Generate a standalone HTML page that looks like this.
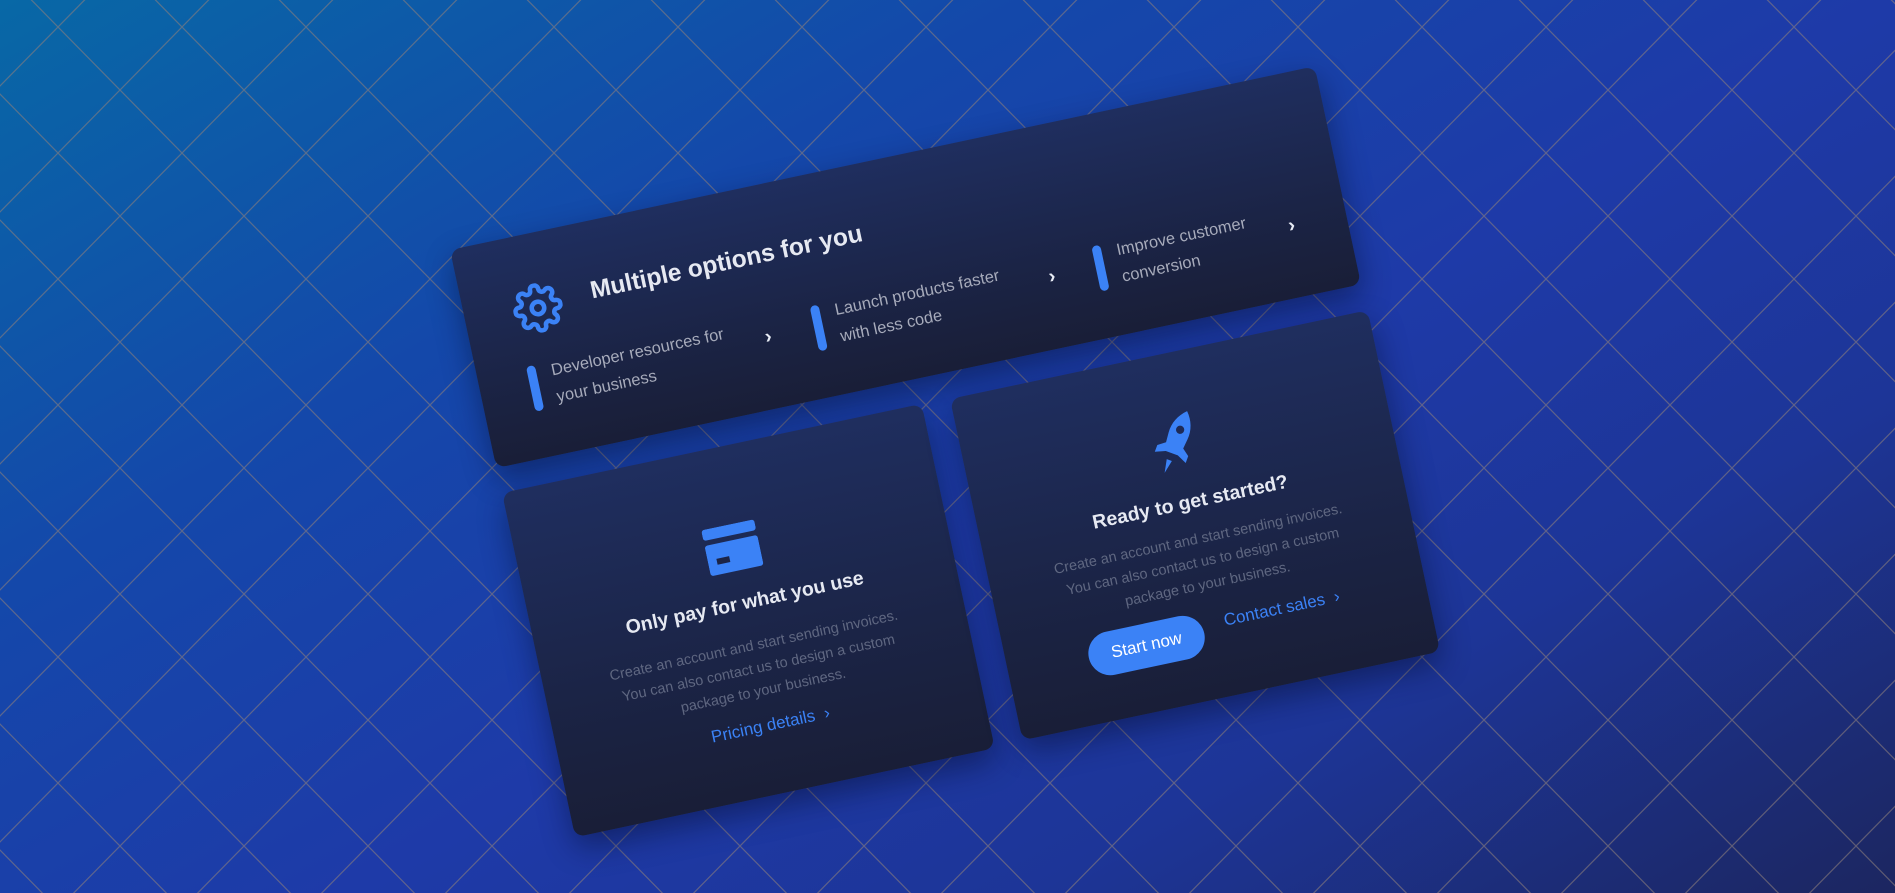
<!DOCTYPE html>
<html><head><meta charset="utf-8"><style>
html,body{margin:0;padding:0;width:1895px;height:893px;overflow:hidden;}
body{position:relative;background:linear-gradient(150deg,#0868a6 0%,#1448aa 30%,#1e3aa8 55%,#1d3597 75%,#1c2660 100%);font-family:"Liberation Sans","DejaVu Sans",sans-serif;}
svg.bg{position:absolute;left:0;top:0;}
.card{position:absolute;transform-origin:0 0;transform:rotate(-12deg);border-radius:10px;background:linear-gradient(180deg,#1f2e5f 0%,#1b2446 60%,#191e37 100%);box-shadow:0 12px 30px rgba(5,10,40,.45);}
.card *{position:absolute;}
.bar{width:9px;height:46px;border-radius:5px;background:#3b82f6;}
.it{color:#a7abbb;font-size:16.5px;line-height:27px;width:200px;}
.chev{color:#e8ecf5;font-size:20px;font-weight:bold;}
.t{font-weight:bold;color:#e6e9f2;white-space:nowrap;}
.c{text-align:center;left:0;width:100%;}
.p{color:#5f6781;font-size:14.5px;line-height:23px;}
.lnk{color:#3b82f6;font-size:17px;white-space:nowrap;}
</style></head><body>
<svg class="bg" width="1895" height="893"><defs><pattern id="g" width="124" height="126" patternUnits="userSpaceOnUse" patternTransform="translate(58,27)"><path d="M0 0L124 126M124 0L0 126" stroke="#8a7d7c" stroke-opacity=".6" stroke-width="1.2" fill="none"/></pattern></defs><rect width="1895" height="893" fill="url(#g)"/></svg>

<div class="card" style="left:450px;top:250px;width:884px;height:223px;">
  <svg style="left:49px;top:50px" width="50" height="50" viewBox="0 0 24 24" fill="none" stroke="#3b82f6" stroke-width="2.2" stroke-linecap="round" stroke-linejoin="round"><circle cx="12" cy="12" r="3"/><path d="M19.4 15a1.65 1.65 0 0 0 .33 1.82l.06.06a2 2 0 1 1-2.830 2.83l-.06-.06a1.65 1.65 0 0 0-1.82-.33 1.65 1.65 0 0 0-1 1.51V21a2 2 0 0 1-4 0v-.09A1.65 1.65 0 0 0 9 19.4a1.65 1.65 0 0 0-1.82.33l-.06.06a2 2 0 1 1-2.830-2.83l.06-.06A1.65 1.65 0 0 0 4.68 15a1.65 1.65 0 0 0-1.51-1H3a2 2 0 0 1 0-4h.09A1.65 1.65 0 0 0 4.6 9a1.65 1.65 0 0 0-.33-1.82l-.06-.06a2 2 0 1 1 2.830-2.83l.06.06A1.65 1.65 0 0 0 9 4.68a1.65 1.65 0 0 0 1-1.51V3a2 2 0 0 1 4 0v.09a1.65 1.65 0 0 0 1 1.51 1.65 1.65 0 0 0 1.82-.33l.06-.06a2 2 0 1 1 2.830 2.83l-.06.06A1.650 1.650 0 0 0 19.4 9a1.65 1.65 0 0 0 1.51 1H21a2 2 0 0 1 0 4h-.09a1.65 1.65 0 0 0-1.51 1z"/></svg>
  <div class="t" style="left:129px;top:56px;font-size:24.5px;">Multiple options for you</div>

  <div class="bar" style="left:50px;top:130px"></div>
  <div class="it" style="left:74px;top:126px;width:190px">Developer resources for your business</div>
  <div class="chev" style="left:290px;top:140px">›</div>

  <div class="bar" style="left:340px;top:130px"></div>
  <div class="it" style="left:364px;top:126px;width:190px">Launch products faster with less code</div>
  <div class="chev" style="left:580px;top:140px">›</div>

  <div class="bar" style="left:628px;top:130px"></div>
  <div class="it" style="left:652px;top:126px;width:170px">Improve customer conversion</div>
  <div class="chev" style="left:825px;top:140px">›</div>
</div>

<div class="card" style="left:502px;top:493px;width:429px;height:352px;">
  <svg style="left:187px;top:78px" width="54" height="48" viewBox="0 0 54 48"><rect x="0" y="0" width="54" height="11" rx="3" fill="#3b82f6"/><rect x="0" y="16" width="54" height="31" rx="3" fill="#3b82f6"/><rect x="9" y="31" width="13" height="6" fill="#1c2446"/></svg>
  <div class="t c" style="top:147px;font-size:19.5px;">Only pay for what you use</div>
  <div class="p c" style="top:191px;">Create an account and start sending invoices.<br>You can also contact us to design a custom<br>package to your business.</div>
  <div class="lnk c" style="top:273px;">Pricing details &nbsp;›</div>
</div>

<div class="card" style="left:950px;top:399px;width:427px;height:349px;">
  <svg style="left:181px;top:58px" width="62" height="62" viewBox="0 0 24 24"><g transform="rotate(-13 12 12)"><path fill="#3b82f6" d="M21 3c-4 0-7.5 1.5-10 4.5L8.5 10.5 5 10l-2 2 4 1.5L10.5 17 12 21l2-2-.5-3.5 3-2.5C19.5 10.5 21 7 21 3zm-5.5 7a1.6 1.6 0 1 1 0-3.2 1.6 1.6 0 0 1 0 3.2zM6 16.5 3 21l4.5-3z"/></g></svg>
  <div class="t c" style="top:140px;font-size:19.5px;">Ready to get started?</div>
  <div class="p c" style="top:178px;">Create an account and start sending invoices.<br>You can also contact us to design a custom<br>package to your business.</div>
  <div style="left:82px;top:260px;width:118px;height:44px;border-radius:22px;background:#3b82f6;color:#fff;font-size:17px;line-height:44px;text-align:center;">Start now</div>
  <div class="lnk" style="left:222px;top:264px;">Contact sales &nbsp;›</div>
</div>
</body></html>
